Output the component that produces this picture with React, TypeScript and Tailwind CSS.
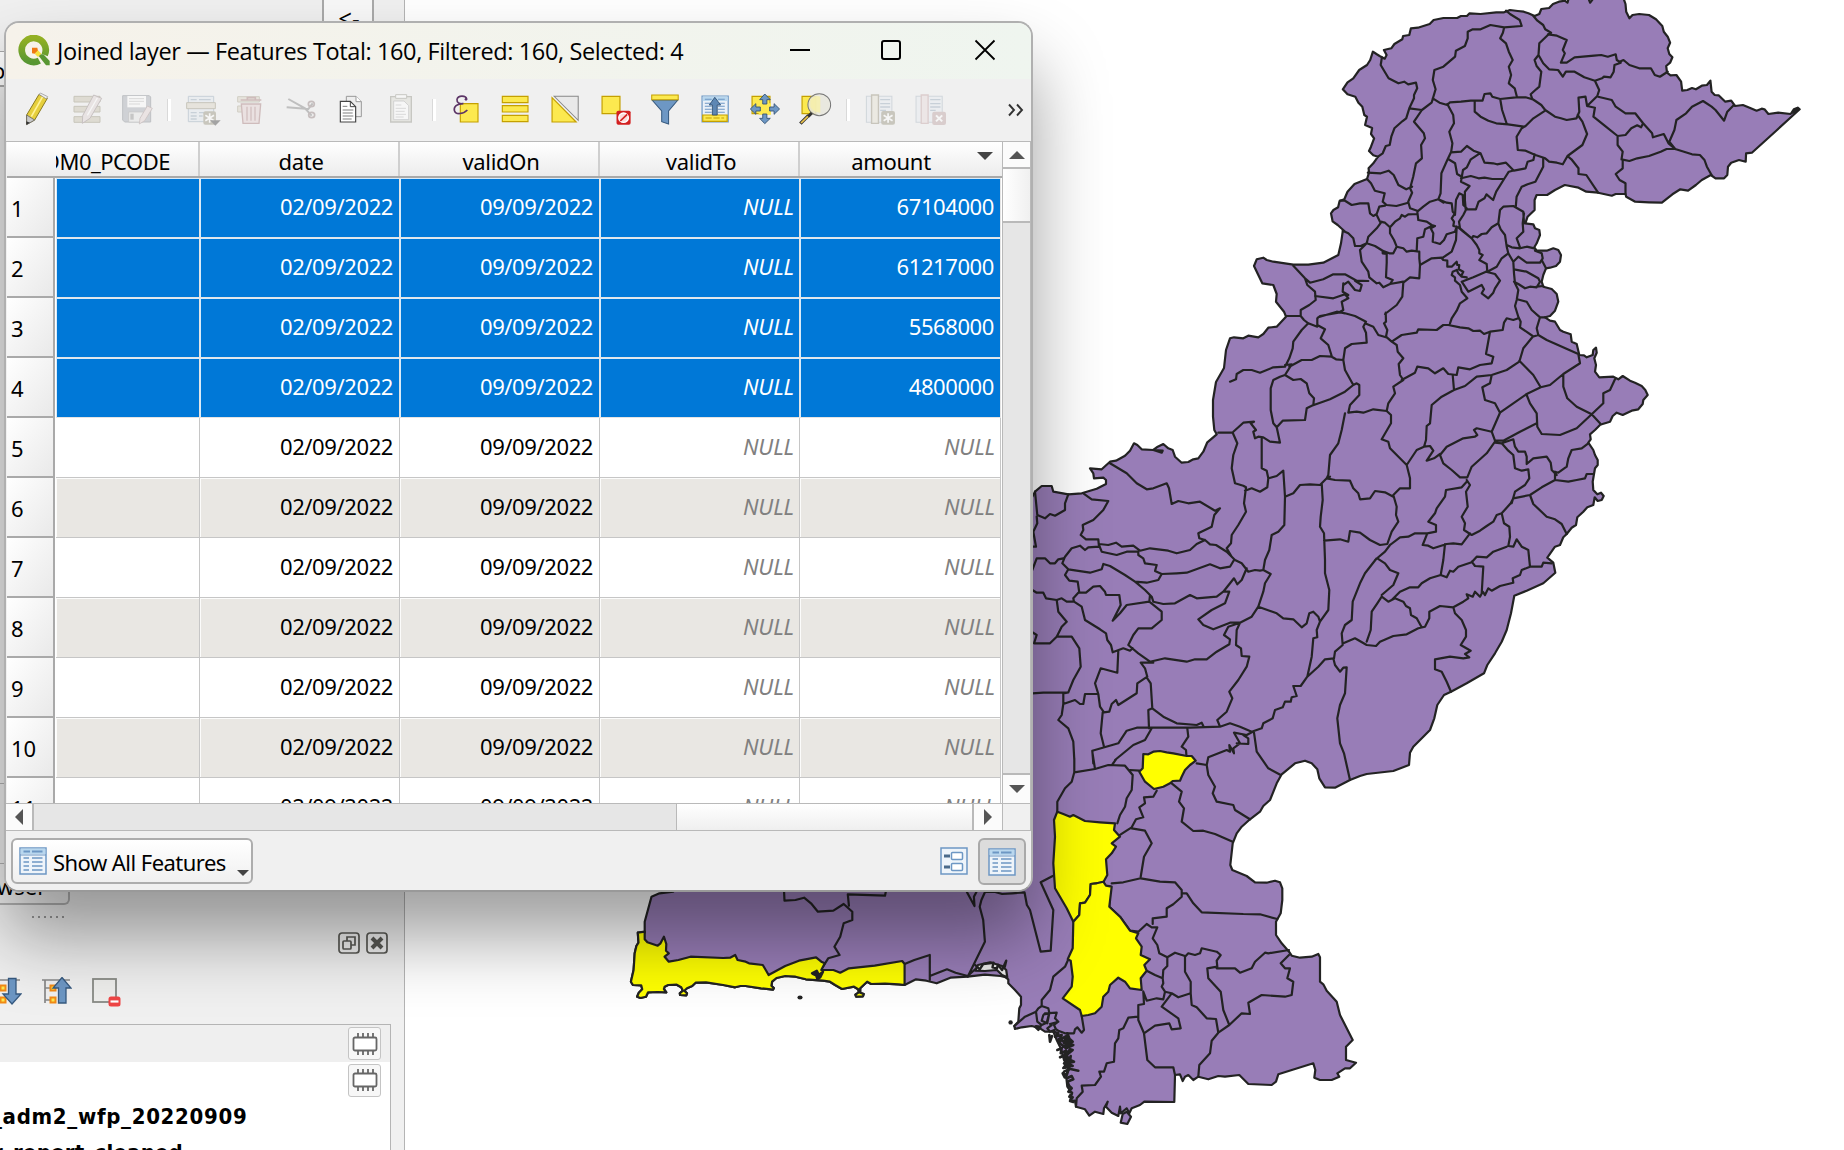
import React from "react";

/* ---------- map geometry ---------- */

type View = { x: number; y: number; sx: number; sy: number };

const A: View = { x: 1230, y: 0, sx: 1 / 2.554, sy: 1 / 3 };
const B: View = { x: 1230, y: 230, sx: 1 / 3, sy: 1 / 3 };
const C: View = { x: 1030, y: 400, sx: 1 / 3, sy: 1 / 3 };
const D: View = { x: 1300, y: 400, sx: 1 / 3, sy: 1 / 3 };
const E: View = { x: 1030, y: 720, sx: 1 / 3, sy: 1 / 3 };
const F: View = { x: 520, y: 740, sx: 1 / 2.904, sy: 1 / 3 };
const G: View = { x: 1340, y: 190, sx: 1 / 3, sy: 1 / 3 };
const H: View = { x: 990, y: 980, sx: 1 / 3, sy: 1 / 3 };

const pts = (v: View, s: string) =>
  s
    .trim()
    .split(/\s+/)
    .map((p) => {
      const [x, y] = p.split(",").map(Number);
      return (v.x + x * v.sx).toFixed(1) + " " + (v.y + y * v.sy).toFixed(1);
    })
    .join(" L");

const line = (v: View, s: string) => "M" + pts(v, s);
const lines = (v: View, s: string[]) => s.map((l) => line(v, l)).join(" ");

const coastSouth =
  "1117,735 1100,733 1060,731 1020,732 1008,725 995,738 988,745 988,758 998,762 996,769 976,770 974,764 984,757 982,748 970,740 935,747 915,735 900,725 880,722 830,718 800,710 770,708 745,714 732,725 730,737 737,744 735,749 700,745 655,738 640,738 625,742 590,735 540,727 510,728 500,738 485,745 477,752 485,760 483,766 465,765 464,760 473,752 468,742 455,734 430,735 420,740 418,747 425,757 400,756 372,757 366,770 350,774 340,770 345,758 355,748 352,736 328,735 322,725 330,690 333,640 338,618 344,608 342,578";

const outline =
  "M" +
  [
    pts(B, "338,5"),
    pts(A, "292,693 275,675 262,664 258,640 264,630 276,622 280,603 292,598 300,575 318,552 350,537 355,518 354,505 366,490 378,470 366,466 355,453 360,440 368,415 360,402 363,384 345,375 350,350 343,345 338,320 328,308 320,290 300,283 288,268 300,247 315,235 330,210 350,195 358,180 365,155 374,162 382,168 395,176 400,165 393,150 412,145 420,132 440,118 442,108 458,105 462,85 480,83 510,72 520,60 545,54 580,54 590,48 605,48 612,40 640,42 680,37 700,37 715,30 735,33 750,35 762,40 778,48 790,42 795,27 815,24 825,12 840,5 855,2 862,8 865,-5 915,-5 920,8 928,-5 1005,-5 1010,12 1012,35 1020,55 1028,45 1045,42 1070,45 1088,58 1104,78 1108,95 1118,110 1124,128 1118,145 1122,162 1130,172 1124,188 1114,198 1116,218 1125,226 1140,225 1152,245 1155,272 1168,270 1180,264 1190,268 1205,257 1218,255 1227,242 1230,275 1238,285 1248,286 1265,305 1280,302 1290,318 1310,315 1330,325 1345,332 1358,326 1365,328 1375,342 1400,338 1432,342 1440,328 1450,323 1455,328 1395,392 1333,458 1318,460 1317,485 1300,480 1280,488 1272,500 1270,525 1262,535 1240,535 1228,525 1205,540 1190,555 1170,572 1150,568 1130,583 1103,608 1070,607 1035,605 1012,590 1010,582 985,582 975,587 940,578 910,575 890,563 855,555 830,570 810,585 783,585 778,600 778,630 760,650 755,668"),
    pts(G, "555,100 580,103 585,115 598,120 600,135 590,160 583,172 590,182 620,182 640,175 655,180 663,195 660,215 648,228 630,233 618,235 610,255 605,275 610,290 635,297 650,312 655,335 645,362 630,378"),
    pts(B, "945,262 960,272 975,275 990,300 1000,305 1022,313 1025,335 1040,342 1048,375 1062,376 1070,382 1088,375 1090,360 1098,353 1100,368 1093,385 1098,405 1095,425 1108,442 1150,440 1165,448 1178,438 1200,452 1215,458 1235,468 1246,480 1253,495 1240,510 1238,522 1225,538 1205,542 1178,555 1160,548 1148,558 1140,575 1115,583"),
    pts(D, "902,73 885,90 870,103 872,118 865,128 880,150 885,165 893,180 893,195 885,205 882,222 878,245 880,270 892,283 903,278 911,288 905,300 893,303 884,292 880,315 862,322 850,335 832,352 828,375 815,383 800,402 790,412 780,435 765,440 742,473 760,488 766,518 730,550 680,572 643,587 633,640 620,690 605,725 585,760 562,795 552,820 500,850 453,875 432,885 412,915 403,955 390,990 370,1010 340,1040 330,1058 327,1095 280,1113 200,1122 180,1128 150,1140 105,1163 75,1162 58,1135 52,1108 35,1090"),
    pts(E, "825,122 795,130 755,163 740,190 728,220 720,240 700,258 690,275 660,298 635,320 620,340 608,370 601,435 607,450 650,468 675,487 710,488 735,482 750,487 757,505 757,540 752,580 738,605 738,645 755,670 777,695 785,707 810,713 845,710 865,702 870,712 870,785 880,793 890,812 920,845 930,885 968,960 948,980 948,1020 978,1028 960,1045 945,1045 922,1060 928,1070 905,1080 870,1080 853,1073 856,1050 850,1030 745,1063 738,1085 725,1095 655,1092 628,1065 585,1070 565,1068 535,1078 505,1070 490,1080 475,1065 465,1070 458,1083 450,1063 435,1065 433,1146 343,1145 330,1155 305,1165 298,1180 290,1165 272,1180 270,1160 265,1188 245,1178 228,1160 233,1145 222,1165 220,1182 195,1175 178,1187 165,1168 138,1160 135,1142"),
    pts(H, "240,363 246,340 232,320 228,285 238,262 222,240 212,205 200,180 190,155 165,155 150,145 125,138 95,142 75,147 73,138 85,125 88,85 93,75 93,50 75,30 55,10"),
    pts(F, "1418,718 1410,712 1395,708 1350,704 1300,710 1250,713 1210,730 1180,722 1150,718"),
    pts(F, coastSouth),
    pts(F, "345,578 362,578 362,545 382,470 405,460 445,455 445,400"),
    pts(C, "-100,1000 -100,320 7,290 15,275 35,258 65,258 70,275 115,283 155,280 200,266 228,252 228,240 220,233 192,235 190,220 180,205 215,208 240,185 258,182 285,167 300,152 312,130 322,135 335,148 370,150 383,140 400,132 415,145 428,150 435,170 455,188 475,186 490,178 505,175 520,155 532,127 560,103 553,90 549,50 549,0"),
    "1216 382 L1224 368 L1226 350",
    pts(B, "0,325 12,322 40,325 55,317 85,322 100,312 115,293 140,290 168,260 162,245 138,215 140,192 130,165 97,160 85,135 72,108 80,88 100,83 110,90 130,95 190,104 235,104 280,98 325,75 333,40"),
  ].join(" L") +
  " Z";

const inner = [
  lines(A, [
    "388,172 385,195 395,215 405,235 430,250 445,245 455,253 475,248 478,265 470,285 470,295 458,325 450,355 440,364 420,385 412,410 408,435 398,438 390,460 378,470",
    "458,325 490,330 515,308 525,268 518,240 522,210 545,200 575,170 577,152 600,138 607,115 607,95 620,88 640,88 665,75 700,82 745,78 740,60 715,42 705,32",
    "700,83 697,98 690,115 705,130 712,155 722,180 712,200 718,225 712,250 727,265 733,292",
    "518,295 535,308 555,315 562,307 590,305 615,302 645,302 650,282 665,280 670,290 690,297 730,292 755,292 770,297",
    "775,48 785,62 800,75 805,88 820,98 812,105 790,130 788,165 778,180 783,198 795,215 790,260 782,268 768,283 772,297",
    "812,103 835,107 860,120 850,150 855,160 845,188 860,188 880,172 930,167 948,165 965,170 985,163 988,180 998,188 982,195 980,215 972,232 955,230 950,235 932,242",
    "788,165 800,190 815,208 838,210 850,230 858,215 880,215 905,232 932,242 943,270 938,288 912,318 908,290 890,293 892,335 885,355 860,360 845,355 830,350 805,330 795,315 780,303 772,297",
    "995,185 1005,180 1020,195 1045,205 1075,205 1085,225 1098,230 1118,215",
    "940,290 975,300 985,320 1010,340 1035,340 1055,370 1078,400 1080,412 1108,402 1120,430 1137,447",
    "912,318 932,323 928,350 960,380 990,408 1010,405 1025,385 1040,376 1050,382 1055,370",
    "1287,315 1270,335 1262,362 1240,330 1230,320 1208,303 1180,320 1165,340 1140,360 1135,390 1122,425 1137,447 1180,463 1200,465 1212,480 1218,500 1230,525",
    "990,408 990,435 1003,455 1000,478 1020,483 1040,475 1070,468 1100,455 1115,447 1137,447",
    "1003,480 1003,505 985,522 995,540 1010,550 1010,582",
    "888,345 900,365 912,402 900,435 862,468 872,478 890,505 890,522 910,525 940,578",
    "862,468 850,493 835,488 815,485 805,475 780,465 755,452 735,450 732,410 745,385 755,378 775,355 805,332",
    "625,302 625,335 640,350 660,362 680,370 710,373 750,380",
    "690,297 695,330 707,372",
    "555,312 570,345 572,370 560,395 568,430 565,455 555,480 540,520 538,580 532,598 545,608",
    "565,457 590,455 605,438 622,452 640,460 650,488 672,490 682,493 705,488 725,512 755,505 760,485 775,480 778,463",
    "638,460 615,478 605,502 595,510 592,530 580,522 575,490 558,478",
    "590,535 615,528 635,535 650,533 670,537 700,537 712,515 722,512",
    "592,530 590,545 612,558 600,575 600,600 602,628 628,628 635,605 650,595 655,583 672,600 680,575 700,537",
    "800,475 800,500 780,545 760,553 745,560 732,590 730,620",
    "490,330 470,365 495,400 498,415 488,435 490,475 475,490 468,530 460,565 465,578 455,605 460,625 478,632",
    "352,518 385,520 405,512 418,525 430,555 450,568 465,560",
    "350,537 360,550 370,572 395,580 390,605 400,615 425,618 455,608",
  ]),
  lines(G, [
    "0,32 15,32 35,45 60,40 85,40 90,70 100,78 110,72 118,50 135,47",
    "232,65 250,50 270,35 295,28 320,38 335,40 338,65 345,72",
    "345,75 348,30 358,10 368,15 370,45 380,55",
    "345,70 335,85 342,95 340,108 355,112",
    "380,55 370,75 357,95 360,115 375,128 395,145 400,138 412,142 425,132 440,130 455,112 475,100 480,60 490,50 520,48 550,65 552,100",
    "110,75 120,95 135,98 150,112 165,95 180,85 185,75 195,80 205,73 232,72",
    "232,65 235,90 260,95 275,105 285,108 272,115 280,130 278,155 300,162 312,150 320,133 345,125 350,110",
    "275,108 255,118 250,140 232,145 230,182",
    "150,112 150,130 162,150 170,170 160,190 148,190 128,182 105,168 80,160 85,140 110,115 125,95",
    "80,160 62,168 45,168 40,145 25,130 8,122",
    "170,170 190,175 200,185 215,182 238,185 238,205 240,225 238,265 210,262 190,278 187,320 170,345 135,372",
    "80,160 60,180 65,215 85,245 88,262 110,280 118,278 130,292 150,282 190,275",
    "128,182 128,190 140,192 140,218 138,262 158,270 150,282",
    "350,110 348,150 335,185 305,205",
    "240,225 275,205 305,203 310,210 322,212 322,230 335,230 350,215 352,225 358,225 356,238 370,245 365,255",
    "380,262 365,260 355,250 350,240 338,245 335,255 345,262 345,272 360,285 365,305 382,325 360,340 350,362 335,385 330,400",
    "355,112 370,125 395,145 410,165 418,180 418,190 428,195 418,210 440,222 442,245",
    "475,100 482,118 495,135 500,170 505,190 520,215 522,250 525,280 535,300 530,330 525,348 535,380",
    "442,245 470,230 485,205 505,190",
    "438,245 465,252 480,272 465,295 460,308 445,325 425,310 432,298 425,285 385,305 365,275 400,262 438,245",
    "552,70 548,100 550,125 530,145 540,172",
    "500,165 515,172 540,175 560,170 583,175",
    "520,215 535,200 560,218 600,218 608,205 605,190 585,182",
    "605,210 618,235",
    "522,238 560,245 595,265 600,275 590,292 570,290 555,295 535,282 522,275",
    "590,290 610,288",
  ]),
  lines(B, [
    "190,107 225,145 240,158 280,148 310,133 345,133 380,152 415,153",
    "225,145 232,165 255,185 257,210 238,225 212,240 212,258 168,258",
    "255,198 310,205 345,193 355,205 335,215 340,240 325,248 270,258 262,265 262,285",
    "212,258 222,270 235,280 262,290",
    "340,165 355,155 375,180 390,183 395,165 375,152",
    "340,160 338,185 355,195",
    "467,248 468,275 462,280 472,300 468,320 485,335 515,315 560,308 565,298 620,300 640,285 655,285",
    "655,285 690,292 715,295 730,303 750,302 762,312 780,305 818,300 822,278 830,265 850,270 865,265",
    "865,260 872,275 870,292 908,318",
    "862,208 890,215 905,240 930,262 945,262",
    "930,262 920,295 925,315",
    "235,280 215,300 190,335 188,355 178,385 165,410 130,412 90,428 65,420 40,420 20,432 18,448 0,455",
    "165,405 185,403 165,435 150,440 130,450 122,475 122,540 130,580 140,592 158,572 225,570 230,535 250,525 252,505 238,490 230,460 212,447 190,450 165,435",
    "178,410 215,390 245,390 270,378 305,380 318,388 340,390 345,355 365,342 410,338 408,308 400,290 408,275 375,258 345,250 320,245 265,262",
    "262,285 285,298 272,325 295,345 305,378",
    "405,280 430,290 445,315 468,322",
    "245,527 300,508 345,485 370,465 345,420 340,390",
    "370,465 380,460 388,465 388,495 360,525 355,548 380,545 400,548 430,538 470,543",
    "485,335 500,345 503,365 520,385 506,402 510,435 520,450 490,470 495,490 475,520 470,543 483,555 483,580 455,628 475,635 480,655 530,705 540,745 540,775",
    "515,450 555,428 562,410 595,415 615,430 640,415 655,432 680,435 685,412 720,418 750,405 785,400 790,380 768,372 780,305",
    "668,435 672,480 635,500 605,525 600,580 590,588 588,630 582,650",
    "672,480 705,468 740,440 785,435 830,420 868,395 880,355 908,320 925,315 950,330 1045,372 1050,400 1000,432 960,465 932,472 890,492 810,548 785,605",
    "868,392 890,415 910,435 932,472",
    "785,435 780,460 757,472 765,510 795,520 810,548",
    "1000,435 1000,470 1012,505 1040,530 1085,553 1120,520 1120,490 1140,480 1155,448",
    "1085,553 1110,580",
    "1085,553 1040,595 990,615 935,612 922,590 920,550 900,520 890,495",
    "920,580 870,605 820,632 795,632 785,605 740,595 732,600 742,615 735,620 700,625 650,650 630,675",
    "582,650 600,648 610,662 590,692 612,685 630,672",
    "582,650 560,660 530,705",
    "630,675 640,700 665,720 690,742 712,742 725,710 770,670 795,635",
    "345,550 335,600 325,640 300,675 295,735 290,745 300,740",
    "140,592 150,638 120,635 100,622 85,620 75,625 70,605 78,600 62,580 72,575 40,578 10,605",
    "95,622 95,715 110,722 115,745 140,738 160,722 165,800 190,790 210,765 240,763 270,765 290,745",
  ]),
  lines(C, [
    "565,98 608,98 622,130 610,165 605,205 615,250 640,257 648,262 642,310 648,335 625,375 605,405 603,430 590,445 605,470",
    "645,272 665,265 690,275 712,262 715,235",
    "765,290 763,375 745,395 725,405 718,450 705,480 700,510",
    "875,250 878,300 872,350 870,380 882,400 885,480 885,520 898,570 895,630 870,665",
    "890,235 915,240 960,242 970,265 985,280 990,298 1020,295 1035,273 1065,277 1090,290",
    "1140,265 1110,265 1090,285 1100,320 1098,345 1105,365 1085,395 1072,432 1050,435 1020,420 990,398 960,393 955,425 930,418 882,422",
    "240,190 290,220 320,250 350,268 370,265 410,250 417,265 425,312 445,303 475,310 510,305 555,332 570,325 553,345 545,380 505,400 508,415 525,420 540,433 558,435 590,455 615,480 635,490 655,515 675,510 690,512 700,510 722,522",
    "722,522 705,550 700,575 685,620",
    "160,280 185,298 235,303 220,330 190,360 158,375 160,390 152,405 168,418 205,418 207,440",
    "207,432 235,435 258,428 275,440 310,437 330,452 360,445 415,452 440,460 480,450 500,432 525,420",
    "207,440 175,442 165,450 150,437 125,445 105,470 97,490 115,508 180,518 215,508 220,492 240,498 285,525 315,545 350,548 385,540 395,522 375,513 380,495 345,490 340,475 325,465 325,455 290,455 260,465 215,455 207,435",
    "395,522 440,520 470,518 540,493 570,505 600,500 612,480",
    "315,545 345,570 365,590 370,605 400,612 435,610 480,585 500,595 560,590 580,575 612,535 622,553 635,540 650,505",
    "580,575 598,575 585,610 545,630 505,658 520,675 550,688 600,668 630,668 665,650 685,620",
    "115,508 105,525 118,542 143,545 148,578 168,578 190,560 210,558 225,575 228,585 268,585 272,615 248,662 270,640 290,615 358,605 360,585",
    "358,605 395,635 395,660 365,685 325,685 310,705 295,735 325,760 360,785 405,775 470,785 495,778 530,778 560,755 598,733 600,718 582,705 595,680 630,668",
    "630,668 620,690 618,735 633,745 635,768 658,770 650,800 625,840 598,875 607,895 590,935 562,960 570,980",
    "145,578 130,595 132,605 155,620 165,660 210,688 228,700 232,720 243,735 248,757 280,745 300,752 308,745",
    "7,570 20,578 40,578 48,595 80,600 95,595 110,605 130,605",
    "80,600 85,635 110,665 95,680 80,710 60,730 12,730 20,705 7,697",
    "80,710 125,710 148,745 152,800 130,840 115,877 40,878 7,880",
    "115,877 100,880 100,912 135,900 150,912 160,912 165,882 205,882 195,850 212,805 262,818 265,752",
    "205,882 210,920 222,937 238,935 245,912 258,900 265,915 320,880 322,850 352,830 345,805 332,788 370,788",
    "352,835 362,850 367,925 400,950 440,970 500,975 515,968 520,978",
    "218,937 212,1000 222,1040",
    "100,912 95,945 85,960 115,985 130,1025 133,1080",
    "367,925 355,930 357,985",
    "190,1090 187,1052 265,1030 290,992 320,983 355,983 480,983 570,980 600,970 630,980 665,995",
    "255,1080 310,1035 345,1020 365,985",
    "472,985 475,1010 465,1025 455,1040 468,1050 470,1078",
    "665,995 695,985 700,970 728,955 735,930 758,922 765,905 782,905 785,892 800,888 790,858 812,858 832,830",
    "685,620 740,640 760,655 790,658 815,682 830,670 838,640 850,635 865,650 870,665 860,690 862,712 850,715 845,770 832,830 865,800 885,778 912,775",
    "15,275 22,345 45,355 60,342 75,347 105,330 105,310 115,283",
    "20,350 22,370 10,395 18,440 7,440",
    "7,510 20,475 45,475 60,490 75,490 85,478 100,475",
    "912,775 915,755 938,735 935,700 945,675 965,660 968,605 990,550 1005,520 1040,475",
    "370,150 398,152 395,158 370,150",
  ]),
  lines(D, [
    "270,435 255,455 225,480",
    "232,475 255,490 270,510 295,520 280,555 245,585",
    "245,590 265,605 285,595 310,605 318,618 330,625 333,645 350,655 365,682",
    "245,590 232,610 215,635 212,690 200,725",
    "130,730 165,715 200,735 228,738 240,725 280,708 320,703 355,685 375,680 388,655 388,635 420,618 460,622 490,605 505,595 500,583 518,590 525,575 540,590 548,575 555,585 565,565 575,572 600,558 640,548 638,535 660,525 665,510 690,500 725,500 730,488 755,490",
    "270,435 300,412 325,410 345,400 382,400 408,395 408,375 385,365 405,340 410,325 435,290 438,270 485,262 500,245",
    "382,400 368,435 385,437 400,445 440,432 460,430 485,433 510,400",
    "435,432 430,480 422,525 390,535 365,550 355,562 330,562 300,575 275,600",
    "422,525 440,532 450,512 460,515 475,500 515,487 530,470 560,472 580,455 620,440",
    "500,240 510,255 498,275 503,320 485,350 495,370 492,390 515,405 540,392 560,378 580,365 590,345 605,340 632,310 640,295 690,285 725,262 765,240",
    "605,340 612,370 628,380 630,410 625,438 640,440 650,418 665,440 685,450 690,500",
    "515,485 525,498 550,500 545,580",
    "585,128 605,130 625,152 640,165 645,205 665,212 685,208 688,235 675,255 645,275 635,310",
    "690,285 700,312 740,350 765,358 785,372 800,402",
    "765,240 805,245 830,240 855,235 860,222 880,222",
    "765,240 765,215 775,218 800,200 805,175 815,150 845,145 865,130",
    "770,225 755,210 752,188 740,170 700,175 680,192 680,170 675,155 655,155 645,140 640,118 605,130",
    "460,622 465,640 485,660 498,690 498,710 482,735 512,752 495,762 508,772 490,775 450,770 405,778 405,808 425,815 440,845 453,875",
    "100,775 105,795 120,815 130,803 140,802 135,880 120,915 112,955 120,1030 132,1060 150,1140",
  ]),
  lines(E, [
    "133,115 133,157 195,147 235,135 285,137 308,165 305,210 290,235 285,260 270,285 262,310",
    "187,95 195,147",
    "248,132 258,118",
    "133,157 125,185 105,205 82,245 82,275",
    "300,150 328,152",
    "262,350 285,335 305,322 318,298 340,292 328,262 345,250 342,232 370,230 380,212",
    "305,325 345,332 365,370 342,410 332,470",
    "425,190 455,215 447,245 462,265 455,305 490,333 520,332 555,342 608,365",
    "245,490 280,487 332,475 390,485 435,487 455,510 455,530 430,553 410,565 410,590 368,595 368,612",
    "455,520 470,520 490,550 515,577 640,582 690,583 742,597",
    "240,500 238,560 270,590 300,632 325,635 350,612 365,622 382,622 368,655 382,675 388,700 412,712",
    "412,712 412,738 400,750 398,775 375,765 350,752",
    "398,775 400,790 395,800 405,815 400,838 380,835 350,842 340,815",
    "412,712 435,698 465,708 465,755 482,785 482,820 445,832 425,820 405,815",
    "465,710 475,700 495,705 510,700 515,685 560,695 572,705 560,722 562,740 532,745 535,775 572,815 580,870 598,915",
    "560,745 615,745 630,758 665,745 675,725 705,698 715,700 777,690",
    "777,705 752,730 765,745 780,745 772,775 790,785 785,825 765,830 695,825 655,848 660,882 635,880 598,915 565,938",
    "482,820 485,855 500,862 530,895 558,897 565,938 545,962 540,1000 508,1035 505,1070",
    "425,820 395,860 445,895 452,925 425,928 418,910 375,917 342,940 325,900 325,855 342,852 340,815",
    "342,940 352,1020 375,1042 430,1042 435,1065",
    "325,890 295,893 280,925 268,930 265,955 255,970 252,1025 230,1030 222,1055 208,1055 213,1070 195,1095 155,1097 158,1115 140,1135 138,1160",
    "672,38 680,95 715,145 752,165",
    "530,135 535,112 590,90 600,95 598,75 612,100 610,85 630,70 612,38 650,45 668,35",
    "620,70 655,72 655,55 640,45",
    "500,130 530,135 535,165 555,200 548,220 560,245 610,255 615,270 660,298",
    "113,722 105,740 70,770 60,810 35,840 35,858",
    "0,570 32,695 62,692 70,570 32,487 68,468",
  ]),
  lines(H, [
    "73,138 105,110 138,95 145,85 155,78 175,85 178,98 170,128 155,135 142,125 138,95",
    "160,105 155,122 172,130 178,100 162,103",
    "165,100 200,98 195,115 205,125 180,132",
    "205,125 192,135 198,148 180,155 172,145 185,135",
    "135,140 145,150 152,140 138,138",
    "275,108 282,150 275,158 262,142 255,148 252,160 225,160 205,152 198,148",
  ]),
  lines(F, [
    "767,457 768,482 800,480 825,473 845,490 865,515 910,512 940,492 965,515 965,540 940,550 930,590 913,620 928,645 895,655 880,680",
    "955,497 952,463 1060,467 1062,457",
    "1117,672 1145,660 1190,645 1190,720",
    "1190,708 1240,688 1265,698 1300,708",
    "1300,710 1350,605 1345,540 1335,500 1340,480 1350,457",
    "1298,457 1320,498 1318,470 1325,457",
    "1352,455 1380,456 1400,462 1430,460 1465,457 1472,495 1481,510",
    "1300,708 1325,685",
  ]),
].join(" ");

const selected = [
  line(E, "340,102 355,103 370,95 390,93 410,97 430,100 470,108 485,108 497,122 480,135 465,150 455,170 450,182 428,183 420,190 400,200 372,207 345,185 328,155 338,145 340,102") + "Z",
  line(E, "82,275 100,282 120,290 130,285 165,303 210,307 255,310 252,330 270,350 245,370 258,380 245,400 228,418 232,465 220,487 182,492 180,525 165,548 150,550 148,585 130,605 110,565 75,505 70,430 75,350 72,300") + "Z",
  line(E, "182,492 200,490 220,485 228,497 245,500 238,560 270,590 300,632 325,640 318,655 335,680 332,705 360,718 343,735 350,752 332,775 335,810 300,805 285,785 265,773 240,795 235,815 220,830 215,860 195,880 175,885 155,888 150,870 98,835 125,800 128,770 122,722 113,718 128,685 130,605 148,585 150,550 165,548 180,525") + "Z",
  line(
    F,
    coastSouth +
      " 362,575 362,598 370,607 400,617 408,610 418,590 425,612 424,632 432,640 420,650 432,665 460,660 495,650 590,654 610,653 625,645 632,660 655,665 665,670 705,675 715,692 722,705 770,678 810,662 860,652 875,665 885,670 875,690 910,690 930,698 955,685 1030,677 1110,663 1117,672"
  ) + "Z",
];

const delta = lines(H, [
  "178,165 180,185 186,168",
  "190,155 205,160 195,170 215,165 208,180 230,168 222,190 240,178 248,185 232,198 250,195 228,205 212,192 205,178 215,175 235,172 240,190 220,200",
  "232,160 238,175 225,178 245,182 230,190 215,182",
  "202,210 215,205 212,220 228,212 222,230 240,208 248,210 230,225 236,238 252,245 232,250 248,258 228,258 238,266 265,272",
  "210,232 225,225 232,240 222,250 235,262 220,264 240,240 226,236",
  "222,275 236,268 230,285 218,280 224,292",
  "230,215 228,262 242,228 236,270",
  "230,295 245,288 250,298 232,305 238,318 245,325 235,335 246,338 238,350 248,352 240,363 250,366",
]);

function DistrictMap() {
  return (
    <svg className="absolute inset-0 h-full w-full" viewBox="0 0 1844 1150">
      <g stroke="#232323" strokeWidth="2.2" strokeLinejoin="round" strokeLinecap="round">
        <path d={outline} fill="#987db7" />
        <path d={inner} fill="none" />
        {selected.map((d, i) => (
          <path key={i} d={d} fill="#ffff00" />
        ))}
        <path d={line(E, "272,1208 278,1182 290,1175 303,1190 292,1212") + "Z"} fill="#987db7" />
        <path d={line(F, "1322,692 1330,675 1365,667 1400,678 1412,690 1415,712 1400,705 1385,690 1350,693") + "Z"} fill="#e9e9e9" />
        <path d={line(F, "1322,675 1335,688 1345,672 1375,668 1372,682 1385,685 1388,674 1400,690 1412,662 1408,680")} fill="none" strokeWidth="2.4" />
        <path d={line(F, "848,700 862,692 868,705 880,695 872,712 864,718 860,706 850,702")} fill="#232323" strokeWidth="2.4" />
        <path d={delta} fill="none" strokeWidth="2.6" />
      </g>
      <ellipse cx="800" cy="997.6" rx="2.6" ry="2" fill="#232323" />
      <ellipse cx="1010.6" cy="1022.4" rx="2.2" ry="2.2" fill="#232323" />
      <path d={line(A, "1435,342 1440,328 1450,322 1456,328 1445,340") + "Z"} fill="#232323" />
    </svg>
  );
}

/* ---------- toolbar ---------- */

function Icon({ x, w = 96, faded = false, children }: { x: number; w?: number; faded?: boolean; children: React.ReactNode }) {
  return (
    <div className="flex w-[50px] shrink-0 items-center justify-center">
      <svg className={faded ? "h-9 w-8 opacity-40" : "h-9 w-8"} viewBox={`${x} 276 ${w} 108`} preserveAspectRatio="none" overflow="visible">
        {children}
      </svg>
    </div>
  );
}

function Sep({ className }: { className: string }) {
  return (
    <div className={"flex shrink-0 items-center justify-center " + className}>
      <div className="h-[22px] w-1 border-l border-[#d9d9d9] bg-white" />
    </div>
  );
}

function Toolbar() {
  return (
    <div className="flex h-[62px] shrink-0 items-center bg-[#f0f0f0] pl-[5px]">
      <Icon x={60}>
        <path d="M80 345 117 283 142 295 104 360 80 373Z" fill="#e6cf3c" stroke="#8a7a1e" strokeWidth="3" />
        <path d="M94 350 128 290" stroke="#fff29a" strokeWidth="5" />
        <path d="M117 283 121 279 143 290 139 297Z" fill="#eee" stroke="#888" strokeWidth="2" />
        <path d="M80 345 104 360 80 374Z" fill="#c9c9c9" stroke="#666" strokeWidth="2.5" />
        <path d="M79 364 90 368 79 374Z" fill="#333" />
      </Icon>
      <Icon x={210} faded>
        <g fill="#c5bea6" stroke="#8d876f" strokeWidth="3">
          <path d="M222 289H300V306H222ZM222 319H300V336H222ZM222 350H300V367H222Z" />
        </g>
        <path d="M248 347 281 285 305 295 270 355 247 370Z" fill="#ddd0d0" stroke="#8a7c7c" strokeWidth="3" />
        <path d="M262 346 292 294" stroke="#fff" strokeWidth="4" />
      </Icon>
      <Icon x={360} faded>
        <path d="M368 287H448L452 291V366H374L368 360Z" fill="#a0a5ad" stroke="#777d85" strokeWidth="3" />
        <path d="M382 288H438V322H382Z" fill="#fff" />
        <path d="M387 296H432M387 304H432M387 312H420" stroke="#aaa" strokeWidth="2.5" />
        <path d="M386 336H430V366H386Z" fill="#e4e4e4" stroke="#888" strokeWidth="2" />
        <path d="M391 341H401V359H391Z" fill="#888" />
        <path d="M420 355 442 318 457 325 434 362 418 372Z" fill="#e3d0d0" stroke="#958080" strokeWidth="2.5" />
      </Icon>
      <Sep className="w-4" />
      <Icon x={558} faded>
        <path d="M565 289H641V365H565Z" fill="#dfe7ef" stroke="#8da2b5" strokeWidth="3" />
        <path d="M572 299H590M597 299H632M572 338H590M597 338H612M572 348H590M597 348H608M572 357H590" stroke="#8da2b5" strokeWidth="4" />
        <path d="M560 308H646V326H560Z" fill="#d8d2bf" stroke="#8d876f" strokeWidth="3" />
        <rect x="610" y="334" width="38" height="40" rx="6" fill="#8f8a72" />
        <path d="M629 340V368M616 346 642 362M642 346 616 362" stroke="#fff" strokeWidth="5" />
        <path d="M630 361H662L646 377Z" fill="#333" />
      </Icon>
      <Icon x={708} faded>
        <path d="M713 290H778V306H713ZM713 318H730V336H713Z" fill="#d8d2bf" stroke="#a49d86" strokeWidth="3" />
        <path d="M722 300H784M742 299V293H766V299" stroke="#a07070" strokeWidth="5" fill="none" />
        <path d="M724 312H782L777 370H729Z" fill="#e2cccc" stroke="#a07070" strokeWidth="4" />
        <path d="M741 320V362M753 320V362M765 320V362" stroke="#a07070" strokeWidth="3.5" />
      </Icon>
      <Icon x={858} faded>
        <path d="M860 322 925 327 938 310M865 297 915 325 935 347" stroke="#777" strokeWidth="6" fill="none" />
        <ellipse cx="934" cy="312" rx="9" ry="8" fill="none" stroke="#8a7474" strokeWidth="5" />
        <ellipse cx="935" cy="345" rx="9" ry="8" fill="none" stroke="#8a7474" strokeWidth="5" />
      </Icon>
      <Icon x={1008}>
        <path d="M1039 289H1068L1084 305V350H1039Z" fill="#eee" stroke="#999" strokeWidth="3" />
        <path d="M1068 289V305H1084" fill="#fff" stroke="#999" strokeWidth="3" />
        <path d="M1021 304H1051L1067 320V366H1021Z" fill="#fff" stroke="#444" strokeWidth="3.5" />
        <path d="M1051 304V320H1067" fill="none" stroke="#444" strokeWidth="3" />
        <path d="M1028 319H1042M1028 330H1060M1028 339H1058M1028 348H1060M1028 357H1055" stroke="#666" strokeWidth="2.5" />
      </Icon>
      <Icon x={1158} faded>
        <path d="M1172 290H1234V366H1172Z" fill="#d8d8cf" stroke="#8c8c80" strokeWidth="4" />
        <path d="M1187 284H1220V295H1187Z" fill="#fff" stroke="#8c8c80" strokeWidth="3" />
        <path d="M1181 303H1212L1226 317V359H1181Z" fill="#fff" stroke="#999" strokeWidth="2.5" />
        <path d="M1187 315H1204M1187 325H1218M1187 334H1214M1187 343H1218M1187 351H1211" stroke="#aaa" strokeWidth="2.5" />
      </Icon>
      <Sep className="w-3.5" />
      <Icon x={1350}>
        <path d="M1381 311H1434V366H1381Z" fill="#fce94f" stroke="#c4a000" strokeWidth="3.5" />
        <path d="M1400 297C1398 286 1374 285 1371 298C1370 308 1378 312 1390 311C1370 311 1361 320 1363 331C1366 345 1390 343 1402 330" fill="none" stroke="#5c3566" strokeWidth="5" />
        <circle cx="1398" cy="298" r="4" fill="#5c3566" />
      </Icon>
      <Icon x={1500}>
        <path d="M1507 289H1584V308H1507ZM1507 317H1584V336H1507ZM1507 346H1584V365H1507Z" fill="#fce94f" stroke="#c4a000" strokeWidth="3.5" />
      </Icon>
      <Icon x={116} w={93}>
        <path d="M128 289H198V361Z" fill="#e9e9e9" stroke="#888" strokeWidth="3" />
        <path d="M122 293V366H192Z" fill="#fce94f" stroke="#c4a000" strokeWidth="3.5" />
      </Icon>
      <Icon x={261} w={93}>
        <path d="M267 289H319V341H267Z" fill="#fce94f" stroke="#c4a000" strokeWidth="3.5" />
        <rect x="309" y="332" width="41" height="42" rx="5" fill="#d32020" />
        <circle cx="329.5" cy="353" r="14" fill="#fbdada" stroke="#fff" strokeWidth="4" />
        <path d="M320 363 340 343" stroke="#d32020" strokeWidth="5" />
      </Icon>
      <Icon x={407} w={93}>
        <path d="M413 300H488L461 333V372L441 365V333Z" fill="#6d97c4" stroke="#36597f" strokeWidth="3" />
        <path d="M412 285H489V299H412Z" fill="#fce94f" stroke="#c4a000" strokeWidth="3" />
      </Icon>
      <Icon x={552} w={93}>
        <path d="M558 288H634V366H558Z" fill="#eaf1f8" stroke="#6d97c4" strokeWidth="3.5" />
        <path d="M560 290H632V303H560Z" fill="#b9d7ee" />
        <path d="M566 298H586M604 298H624M566 310H584M606 310H624M566 319H586M604 319H624M566 328H586M604 328H624M566 337H586M604 337H624" stroke="#6d97c4" strokeWidth="3" />
        <path d="M560 345H631V364H560Z" fill="#fce94f" stroke="#c4a000" strokeWidth="3.5" />
        <path d="M568 354H622" stroke="#c4a000" strokeWidth="3" strokeDasharray="18 5" />
        <path d="M595 292 612 315H602V345H588V315H579Z" fill="#5d87b4" stroke="#2d4d70" strokeWidth="2.5" />
      </Icon>
      <Icon x={697} w={93}>
        <path d="M703 289H755V341H703Z" fill="#fce94f" stroke="#c4a000" strokeWidth="3.5" />
        <path d="M722 310H758V344H722Z" fill="#fce94f" />
        <g fill="#6d97c4" stroke="#2d4d70" strokeWidth="2.5">
          <path d="M740 282 756 299H746V312H734V299H725Z" />
          <path d="M740 371 756 355H746V342H734V355H725Z" />
          <path d="M698 327 714 311V321H727V333H714V343Z" />
          <path d="M783 327 767 311V321H754V333H767V343Z" />
        </g>
      </Icon>
      <Icon x={842} w={93}>
        <path d="M848 289H888V341H848Z" fill="#fce94f" stroke="#c4a000" strokeWidth="3.5" />
        <circle cx="898" cy="314" r="33" fill="#e8e6dc" fillOpacity=".85" stroke="#777" strokeWidth="3" />
        <path d="M872 300Q886 284 901 290V338Q880 336 872 320Z" fill="#f7f0a8" opacity=".8" />
        <path d="M876 339 866 349" stroke="#333" strokeWidth="9" />
        <path d="M867 346 843 371" stroke="#333" strokeWidth="10" />
        <path d="M865 349 845 369" stroke="#edc44a" strokeWidth="5" />
      </Icon>
      <Sep className="w-3.5" />
      <Icon x={1028} w={93} faded>
        <path d="M1035 289H1109V367H1035Z" fill="#e6ebf0" stroke="#a5b3c0" strokeWidth="3" />
        <path d="M1075 299H1104M1075 311H1104M1075 321H1104M1075 331H1092" stroke="#8da2b5" strokeWidth="4" />
        <path d="M1050 285H1070V370H1050Z" fill="#e4dfcf" stroke="#8d876f" strokeWidth="4" />
        <rect x="1078" y="333" width="40" height="41" rx="6" fill="#8f8a72" />
        <path d="M1098 340V368M1085 346 1111 362M1111 346 1085 362" stroke="#fff" strokeWidth="5" />
      </Icon>
      <Icon x={1173} w={93} faded>
        <path d="M1179 289H1255V367H1179Z" fill="#e6ebf0" stroke="#a5b3c0" strokeWidth="3" />
        <path d="M1220 299H1250M1220 311H1250M1220 321H1250M1220 331H1236" stroke="#8da2b5" strokeWidth="4" />
        <path d="M1194 285H1214V370H1194Z" fill="#e8d8d8" stroke="#c09c9c" strokeWidth="4" />
        <rect x="1226" y="335" width="40" height="40" rx="6" fill="#b79a9a" />
        <path d="M1237 346 1255 364M1255 346 1237 364" stroke="#fff" strokeWidth="6" />
      </Icon>
      <svg className="mr-1.5 ml-auto h-4 w-[18px]" viewBox="0 0 18 16" fill="none" stroke="#333" strokeWidth="1.9">
        <path d="M2 2.5 7 8 2 13.5M10 2.5 15 8 10 13.5" />
      </svg>
    </div>
  );
}

/* ---------- attribute table ---------- */

type Row = { id: number; amount: string | null; selected: boolean };

const rows: Row[] = [
  { id: 1, amount: "67104000", selected: true },
  { id: 2, amount: "61217000", selected: true },
  { id: 3, amount: "5568000", selected: true },
  { id: 4, amount: "4800000", selected: true },
  { id: 5, amount: null, selected: false },
  { id: 6, amount: null, selected: false },
  { id: 7, amount: null, selected: false },
  { id: 8, amount: null, selected: false },
  { id: 9, amount: null, selected: false },
  { id: 10, amount: null, selected: false },
  { id: 11, amount: null, selected: false },
];

const cols = "grid grid-cols-[49px_144px_200px_200px_200px_201px]";

function Cell({ row, value }: { row: Row; value: string | null }) {
  const tone = row.selected
    ? "border-[#e4e4e4] bg-[#0078d7] text-white"
    : row.id % 2 === 0
      ? "border-[#c6c6c6] bg-[#e9e7e3] text-black"
      : "border-[#c6c6c6] bg-white text-black";
  const isNull = value === null;
  return (
    <div className={"flex h-[60px] items-start justify-end border-r border-b pt-[13px] pr-[6px] shadow-[inset_1px_1px_0_rgba(255,255,255,0.85)] " + tone}>
      <span className={isNull ? (row.selected ? "-mr-px tracking-[-0.1px] italic" : "-mr-px tracking-[-0.1px] text-[#808080] italic") : "tracking-[-0.4px]"}>
        {isNull ? "NULL" : value}
      </span>
    </div>
  );
}

function Head({ children, className = "" }: { children?: React.ReactNode; className?: string }) {
  return (
    <div className={"flex h-full items-center overflow-hidden border-r-2 border-[#cfcfcf] pt-1 " + className}>
      {children}
    </div>
  );
}

function Table() {
  return (
    <div className="flex h-[661px] w-[995px] flex-col overflow-hidden bg-white text-[22px] leading-[30px]">
      <div className={cols + " h-[36px] shrink-0 border-b-2 border-[#a9a9a9] bg-linear-to-b from-white to-[#ececec] tracking-[-0.3px]"}>
        <div />
        <Head className="justify-end pr-[28px]"><span className="tracking-[-0.5px]">ADM0_PCODE</span></Head>
        <Head className="justify-center pl-1">date</Head>
        <Head className="justify-center pl-1">validOn</Head>
        <Head className="justify-center pl-1">validTo</Head>
        <div className="relative flex items-center justify-center pt-1 pr-[19px]">
          amount
          <svg className="absolute top-2.5 right-2 h-2 w-4" viewBox="0 0 16 8"><path d="M0 0H16L8 8Z" fill="#444" /></svg>
        </div>
      </div>
      {rows.map((r) => (
        <div key={r.id} className={cols + " h-[60px] shrink-0"}>
          <div className="mr-px border-r-2 border-b-2 border-[#a9a9a9] bg-linear-to-br from-white to-[#e9e9e9] pt-[15px] pl-1">{r.id}</div>
          <Cell row={r} value="" />
          <Cell row={r} value="02/09/2022" />
          <Cell row={r} value="09/09/2022" />
          <Cell row={r} value={null} />
          <Cell row={r} value={r.amount} />
        </div>
      ))}
    </div>
  );
}

function VScroll() {
  return (
    <div className="flex h-[661px] w-[29px] flex-col border-x border-[#b9b9b9] bg-[#e6e6e6]">
      <div className="flex h-[27px] items-center justify-center border-b-2 border-[#b9b9b9] bg-[#fbfbfb]">
        <svg className="h-2 w-4" viewBox="0 0 16 8"><path d="M0 8H16L8 0Z" fill="#555" /></svg>
      </div>
      <div className="h-[54px] border-b-2 border-[#b9b9b9] bg-linear-to-r from-white to-[#f0f0f0]" />
      <div className="grow" />
      <div className="flex h-[30px] items-center justify-center border-t-2 border-[#b9b9b9] bg-[#fbfbfb]">
        <svg className="h-2 w-4" viewBox="0 0 16 8"><path d="M0 0H16L8 8Z" fill="#555" /></svg>
      </div>
    </div>
  );
}

function HScroll() {
  return (
    <div className="flex h-[29px] border-y border-[#b9b9b9] bg-[#e6e6e6]">
      <div className="flex w-7 items-center justify-center border-r-2 border-[#b9b9b9] bg-[#fbfbfb]">
        <svg className="h-4 w-2" viewBox="0 0 8 16"><path d="M8 0V16L0 8Z" fill="#555" /></svg>
      </div>
      <div className="w-[643px] border-r border-[#b9b9b9]" />
      <div className="w-[297px] border-r-2 border-[#b9b9b9] bg-linear-to-b from-white to-[#efefef]" />
      <div className="flex w-7 items-center justify-center bg-[#fbfbfb]">
        <svg className="h-4 w-2" viewBox="0 0 8 16"><path d="M0 0V16L8 8Z" fill="#555" /></svg>
      </div>
      <div className="grow border-x border-[#b9b9b9] bg-[#f0f0f0]" />
    </div>
  );
}

function TableIcon() {
  return (
    <svg className="h-7 w-7 shrink-0" viewBox="0 0 28 28">
      <path d="M1 1H27V27H1Z" fill="#eef4fa" stroke="#6d97c4" strokeWidth="1.5" />
      <path d="M1.6 1.6H26.4V7H1.6Z" fill="#b9d7ee" />
      <path d="M1 8H27" stroke="#6d97c4" />
      <path d="M4.5 4.5H11M13 4.5H23.5" stroke="#6d97c4" strokeWidth="2.2" />
      <path d="M4.5 11H10M13 11H23.5M4.5 15H10M13 15H23.5M4.5 19H10M13 19H23.5M4.5 23H10M13 23H23.5" stroke="#6d97c4" strokeWidth="1.4" />
    </svg>
  );
}

function BottomBar() {
  return (
    <div className="flex h-[60px] items-start bg-[#f0f0f0] pt-[7px] pr-[5px] pl-[5px]">
      <div className="relative flex h-[46px] w-[242px] items-center rounded-md border-2 border-[#adadad] bg-linear-to-b from-white to-[#f0f0f0] pl-1.5 text-[22px]">
        <TableIcon />
        <span className="mt-0.5 ml-1.5 tracking-[-0.54px] whitespace-nowrap">Show All Features</span>
        <svg className="absolute right-0.5 bottom-1.5 h-1.5 w-3" viewBox="0 0 12 6"><path d="M0 0H12L6 6Z" fill="#444" /></svg>
      </div>
      <svg className="mt-[9px] ml-auto h-7 w-7" viewBox="0 0 28 28">
        <path d="M1 1H27V27H1Z" fill="#eef4fa" stroke="#6d97c4" strokeWidth="1.5" />
        <path d="M4 9H10M4 20H10" stroke="#4a6a8a" strokeWidth="3" />
        <rect x="11.5" y="5.5" width="11" height="7" rx="1" fill="#fff" stroke="#6d97c4" strokeWidth="1.5" />
        <rect x="11.5" y="16.5" width="11" height="7" rx="1" fill="#fff" stroke="#6d97c4" strokeWidth="1.5" />
      </svg>
      <div className="ml-2.5 flex h-[47px] w-12 items-center justify-center rounded-md border-2 border-[#a9a9a9] bg-[#dcdcdc]">
        <TableIcon />
      </div>
    </div>
  );
}

function AttributeWindow() {
  return (
    <div className="absolute top-[21px] left-[4px] flex h-[871px] w-[1029px] flex-col overflow-hidden rounded-[15px] border-2 border-[#b0b0b0] border-b-[#999] bg-[#f0f0f0] shadow-[0_45px_72px_rgba(0,0,0,0.38)]">
      <div className="flex h-14 shrink-0 items-center bg-linear-to-r from-[#f6f2ea] to-[#eff5ef] pl-3">
        <svg className="h-8 w-8 shrink-0" viewBox="0 0 96 96">
          <defs>
            <linearGradient id="ring" x2="0" y2="1">
              <stop stopColor="#93b023" />
              <stop offset="1" stopColor="#589632" />
            </linearGradient>
          </defs>
          <path d="M64 77A36 36 0 1 1 80 60" fill="none" stroke="url(#ring)" strokeWidth="20" />
          <path d="M58 58H76L95 78V91H84Z" fill="#589632" />
          <path d="M42 38H58L60 48 50 56 42 55Z" fill="#ee7913" />
          <path d="M50 56 60 46 70 56 60 66Z" fill="#f5e040" />
        </svg>
        <span className="mt-0.5 ml-[7px] font-['Open_Sans',sans-serif] text-[23.5px] tracking-[-0.38px] whitespace-nowrap">
          Joined layer — Features Total: 160, Filtered: 160, Selected: 4
        </span>
        <div className="mr-[35px] ml-auto flex items-center">
          <svg className="mr-[69px] h-6 w-[22px]" viewBox="0 0 22 24"><path d="M1 11H21" stroke="#000" strokeWidth="2" /></svg>
          <svg className="mr-[72px] h-6 w-[22px]" viewBox="0 0 22 24"><rect x="2" y="2" width="18" height="18" rx="2" fill="none" stroke="#000" strokeWidth="2" /></svg>
          <svg className="h-6 w-[22px]" viewBox="0 0 22 24"><path d="M1.5 1.5 20.5 20.5M20.5 1.5 1.5 20.5" stroke="#000" strokeWidth="1.8" /></svg>
        </div>
      </div>
      <Toolbar />
      <div className="flex shrink-0 border-t border-[#b9b9b9] pl-px">
        <Table />
        <VScroll />
      </div>
      <HScroll />
      <BottomBar />
    </div>
  );
}

/* ---------- main window behind ---------- */

function Chip() {
  return (
    <div className="flex h-[33px] w-[33px] items-center justify-center rounded-[3px] border border-[#c4c4c4] bg-[#f7f7f7]">
      <svg className="h-6 w-7" viewBox="0 0 28 24">
        <path d="M7 1V23M12 1V23M17 1V23M22 1V23" stroke="#555" strokeWidth="1.6" />
        <rect x="2.5" y="5.5" width="23" height="13" rx="1.5" fill="#fff" stroke="#666" strokeWidth="1.8" />
      </svg>
    </div>
  );
}

function TreeArrow({ up }: { up: boolean }) {
  return (
    <svg className="h-7 w-[30px] shrink-0" viewBox="0 0 30 28">
      <path d="M0 3H28M3 3V26M3 11H8M3 23H8" stroke="#888" strokeWidth="1.7" fill="none" />
      <rect x="8.5" y="8.5" width="5" height="5" fill="#fce94f" stroke="#f28a16" strokeWidth="2" />
      <rect x="8.5" y="20.5" width="5" height="5" fill="#fce94f" stroke="#f28a16" strokeWidth="2" />
      {up ? (
        <path d="M20 0.5 29 11H24V26H16.5V11H11Z" fill="#6d97c4" stroke="#36597f" strokeWidth="1.3" />
      ) : (
        <path d="M20 27 29 17H24V1.5H16.5V17H11Z" fill="#6d97c4" stroke="#36597f" strokeWidth="1.3" />
      )}
    </svg>
  );
}

function LeftPanels() {
  return (
    <div className="flex h-full w-[405px] shrink-0 flex-col border-r border-[#b4b4b4] bg-[#f0f0f0]">
      <div className="flex h-[51px] shrink-0 items-start justify-end pr-[30px]">
        <div className="flex h-10 w-[52px] justify-center border-x-2 border-[#a9a9a9] bg-[#f8f8f8] pt-0.5 pl-0.5 text-[24px] leading-[32px]">&lt;-</div>
      </div>
      <div className="flex h-[36px] w-20 shrink-0 items-center border-t border-b-2 border-[#a9a9a9] bg-white pt-0.5 text-[22px] leading-[30px]">
        <span className="-ml-[8px]">o</span>
      </div>
      <div className="h-[697px] w-20 shrink-0 border-b border-[#b4b4b4] bg-[#f0f0f0]" />
      <div className="h-20 w-20 shrink-0 border-b border-[#b4b4b4] bg-[#efefef]" />
      <div className="flex h-[41px] w-[70px] shrink-0 items-start rounded-br-md border-r-2 border-b-2 border-[#b4b4b4] pt-[7px] text-[22px] leading-[30px]">
        <span className="-ml-[3px]">wser</span>
      </div>
      <div className="flex h-[27px] shrink-0 items-start gap-1 pt-[11px] pl-8">
        {[0, 1, 2, 3, 4, 5].map((i) => (
          <div key={i} className="h-0.5 w-0.5 bg-[#999]" />
        ))}
      </div>
      <div className="flex h-[22px] shrink-0 justify-end gap-1.5 pr-4">
        <svg className="h-[22px] w-[22px]" viewBox="0 0 22 22" fill="none" stroke="#5a5a55" strokeWidth="1.7">
          <rect x="1" y="1" width="20" height="20" rx="3" />
          <rect x="5" y="9" width="8" height="8" rx="1" />
          <path d="M9 9V5H17V13H13" />
        </svg>
        <svg className="h-[22px] w-[22px]" viewBox="0 0 22 22" fill="none" stroke="#5a5a55" strokeWidth="1.7">
          <rect x="1" y="1" width="20" height="20" rx="3" />
          <path d="M6 6 16 16M16 6 6 16" strokeWidth="4" />
        </svg>
      </div>
      <div className="flex h-[70px] shrink-0 items-start pt-[23px]">
        <div className="-ml-2 flex gap-5">
          <TreeArrow up={false} />
          <TreeArrow up />
          <svg className="h-[30px] w-[30px]" viewBox="0 0 30 30">
            <rect x="1" y="2" width="23" height="23" fill="#eeeeec" stroke="#888a85" strokeWidth="1.8" />
            <rect x="16.5" y="19.5" width="12" height="10" rx="2.5" fill="#ef4545" />
            <path d="M18.5 24.5H26.5" stroke="#fff" strokeWidth="2.2" />
          </svg>
        </div>
      </div>
      <div className="flex h-[130px] w-[391px] shrink-0 flex-col overflow-hidden border-t border-r border-[#b4b4b4] bg-white font-['DejaVu_Sans_Condensed','DejaVu_Sans',sans-serif] text-[22px] font-bold">
        <div className="flex h-[37px] shrink-0 items-center justify-end bg-[#efefef] pr-[9px]"><Chip /></div>
        <div className="flex h-[36px] shrink-0 items-center justify-end pr-[9px]"><Chip /></div>
        <div className="flex h-[36px] shrink-0 items-center"><span className="-ml-2 tracking-[0.7px] whitespace-nowrap">_adm2_wfp_20220909</span></div>
        <div className="flex h-[36px] shrink-0 items-center"><span className="-ml-[7px] tracking-[0.2px] whitespace-nowrap">r_report_cleaned</span></div>
      </div>
    </div>
  );
}

export default function App() {
  return (
    <div className="relative flex h-[1150px] w-[1844px] overflow-hidden bg-white font-['Noto_Sans',sans-serif] text-black">
      <LeftPanels />
      <DistrictMap />
      <AttributeWindow />
    </div>
  );
}
